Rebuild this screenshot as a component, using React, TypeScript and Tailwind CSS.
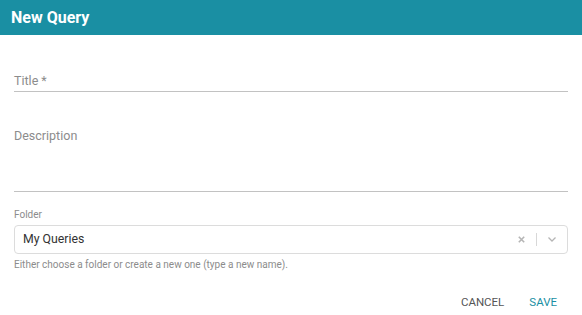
import React from "react";

export default function App() {
  return (
    <div className="h-[315px] w-[582px] overflow-hidden bg-white font-['Roboto',sans-serif]">
      <div className="flex h-[35px] items-center bg-[#1a8fa3] pl-[11px] text-[16px] font-bold text-white">
        New Query
      </div>

      <div className="px-[14px]">
        <div className="mt-[37px] border-b border-[#c2c2c2] pb-[2px] text-[12.5px] leading-[17px] text-[#8c8c8c]">
          Title *
        </div>

        <div className="mt-[35px] h-[65px] border-b border-[#c2c2c2] text-[12.5px] leading-[17px] text-[#8c8c8c]">
          Description
        </div>

        <div className="mt-[16px] text-[10px] leading-[14px] text-[#8c8c8c]">Folder</div>
        <div className="mt-[3px] flex h-[29px] items-center rounded-[4px] border border-[#dcdcdc] pl-[8px] pr-[11px]">
          <span className="flex-1 text-[12.3px] text-[#333]">My Queries</span>
          <svg width="7" height="7" viewBox="0 0 7 7" className="text-[#b5b5b5]">
            <path d="M0.8 0.8l5.4 5.4M6.2 0.8L0.8 6.2" fill="none" stroke="currentColor" strokeWidth="1.6" />
          </svg>
          <span className="mx-[11px] h-[13px] w-px bg-[#d8d8d8]" />
          <svg width="8" height="5" viewBox="0 0 8 5" className="text-[#b5b5b5]">
            <path d="M0.5 0.5l3.5 3.5 3.5-3.5" fill="none" stroke="currentColor" strokeWidth="1.3" />
          </svg>
        </div>
        <div className="mt-[4px] text-[10px] leading-[14px] text-[#8c8c8c]">
          Either choose a folder or create a new one (type a new name).
        </div>

        <div className="mt-[22px] flex justify-end gap-[25px] pr-[11px] text-[11.5px]">
          <button type="button" className="text-[#555]">CANCEL</button>
          <button type="button" className="text-[#1a8fa3]">SAVE</button>
        </div>
      </div>
    </div>
  );
}
